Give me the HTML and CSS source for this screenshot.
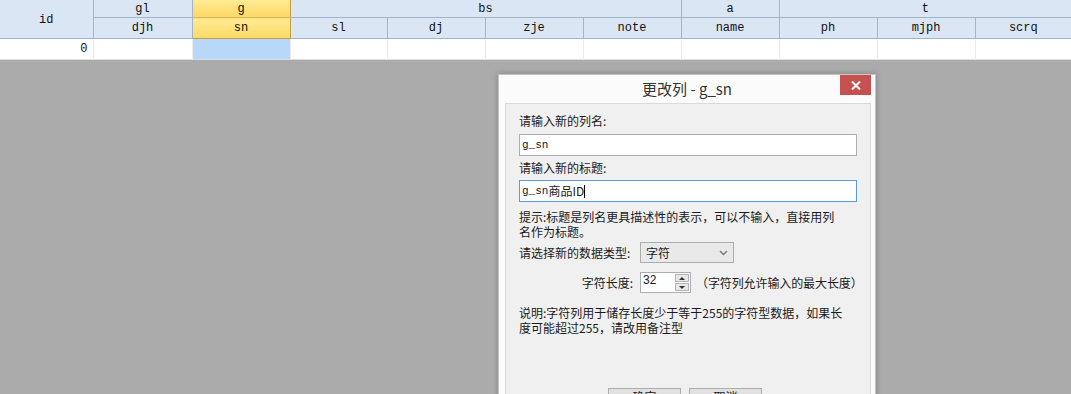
FILE: index.html
```html
<!DOCTYPE html>
<html lang="zh-CN">
<head>
    <meta charset="UTF-8">
    <title>更改列 - g_sn</title>
    <link rel="stylesheet" href="styles.css">
</head>
<body>
    <table class="grid">
        <colgroup>
            <col style="width:93px">
            <col style="width:99px">
            <col style="width:98px">
            <col style="width:97px">
            <col style="width:98px">
            <col style="width:98px">
            <col style="width:98px">
            <col style="width:98px">
            <col style="width:98px">
            <col style="width:98px">
            <col style="width:96px">
        </colgroup>
        <thead>
            <tr class="group-row">
                <th rowspan="2" class="id-head">id</th>
                <th>gl</th>
                <th class="current">g</th>
                <th colspan="4">bs</th>
                <th>a</th>
                <th colspan="3">t</th>
            </tr>
            <tr class="name-row">
                <th>djh</th>
                <th class="current">sn</th>
                <th>sl</th>
                <th>dj</th>
                <th>zje</th>
                <th>note</th>
                <th>name</th>
                <th>ph</th>
                <th>mjph</th>
                <th>scrq</th>
            </tr>
        </thead>
        <tbody>
            <tr class="data-row">
                <td class="num">0</td>
                <td></td>
                <td class="selected"></td>
                <td></td>
                <td></td>
                <td></td>
                <td></td>
                <td></td>
                <td></td>
                <td></td>
                <td></td>
            </tr>
        </tbody>
    </table>

    <div class="dialog">
        <div class="dialog-title">
            <span>更改列 - g_sn</span>
            <div class="close-btn">
                <svg width="10" height="9" viewBox="0 0 10 9">
                    <path d="M1 0.5 L9 8.5 M9 0.5 L1 8.5" stroke="#fff" stroke-width="2"/>
                </svg>
            </div>
        </div>
        <div class="panel">
            <div class="label">请输入新的列名:</div>
            <div class="textbox">g_sn</div>
            <div class="label label-gap">请输入新的标题:</div>
            <div class="textbox focused">g_sn<span class="cjk">商品ID</span><span class="caret"></span></div>
            <p class="hint">提示:标题是列名更具描述性的表示，可以不输入，直接用列<br>名作为标题。</p>

            <div class="form-grid">
                <div class="label">请选择新的数据类型:</div>
                <div class="select">
                    <span>字符</span>
                    <svg width="9" height="6" viewBox="0 0 9 6">
                        <path d="M1 1 L4.5 4.5 L8 1" stroke="#777" stroke-width="1.4" fill="none"/>
                    </svg>
                </div>
                <div class="label right">字符长度:</div>
                <div class="spin-row">
                    <div class="spinner">
                        <span class="spin-value">32</span>
                        <div class="spin-btns">
                            <div class="spin-up"></div>
                            <div class="spin-down"></div>
                        </div>
                    </div>
                    <span class="spin-note">（字符列允许输入的最大长度）</span>
                </div>
            </div>

            <p class="note">说明:字符列用于储存长度少于等于255的字符型数据，如果长<br>度可能超过255，请改用备注型</p>

            <div class="buttons">
                <div class="btn">确定</div>
                <div class="btn">取消</div>
            </div>
        </div>
    </div>
</body>
</html>
```

FILE: styles.css
```css
body {
    margin: 0;
    padding: 0;
    background: #ababab;
    font-family: "Noto Sans CJK SC", "Noto Sans", sans-serif;
    font-size: 12px;
    color: #1a1a1a;
    overflow: hidden;
}

.grid {
    width: 1071px;
    table-layout: fixed;
    border-collapse: collapse;
    font-family: "Liberation Mono", "Noto Sans CJK SC", monospace;
    font-size: 12px;
    background: #fff;
    border-bottom: 1px solid #dcdcdc;
}

.grid th {
    background: #dbe6f4;
    border-right: 1px solid #9fb5cc;
    border-bottom: 1px solid #9fb5cc;
    font-weight: normal;
    color: #111;
    padding: 0;
    line-height: 14px;
    text-align: center;
}

.grid th:last-child {
    border-right: none;
}

.group-row th {
    height: 16px;
    padding-top: 1px;
}

.name-row th {
    height: 20px;
}

.grid .current {
    background: linear-gradient(to bottom, #ffeb94, #fdd865);
    border-left: 1px solid #c59f45;
    border-right: 1px solid #c59f45;
    border-bottom: 1px solid #c59f45;
}

.group-row .current {
    border-bottom: 1px solid #d9b55a;
}

.data-row td {
    height: 20px;
    padding: 0;
    line-height: 14px;
    border-right: 1px solid #ebebeb;
}

.data-row .num {
    text-align: right;
    padding-right: 5px;
    color: #111;
}

.data-row .selected {
    background: #b8d8f9;
}

/* dialog floats over the grid */
.dialog {
    position: absolute;
    left: 498px;
    top: 74px;
    width: 376px;
    height: 340px;
    background: #fbfbfb;
    border: 1px solid #c4c4c4;
    box-shadow: 0 0 6px rgba(0, 0, 0, 0.25);
}

.dialog-title {
    position: relative;
    height: 28px;
    text-align: center;
    font-size: 15px;
    line-height: 28px;
    color: #333;
}

.close-btn {
    position: absolute;
    right: 4px;
    top: 0;
    width: 31px;
    height: 20px;
    background: #c75050;
    display: flex;
    align-items: center;
    justify-content: center;
}

.panel {
    margin: 0 4px 0 6px;
    height: 320px;
    background: #f0f0f0;
    border: 1px solid #dadada;
    padding: 9px 13px 0 13px;
}

.label {
    height: 16px;
    line-height: 16px;
    white-space: nowrap;
}

.label-gap {
    margin-top: 4px;
}

.textbox {
    margin-top: 5px;
    height: 20px;
    background: #fff;
    border: 1px solid #abadb3;
    font-family: "Liberation Mono", monospace;
    font-size: 11px;
    line-height: 20px;
    padding-left: 2px;
    display: flex;
    align-items: center;
}

.textbox .cjk {
    font-family: "Noto Sans CJK SC", sans-serif;
    font-size: 12px;
}

.textbox.focused {
    margin-top: 4px;
    border-color: #569de5;
}

.caret {
    width: 1px;
    height: 13px;
    background: #000;
}

.hint {
    margin: 7px 0 0 0;
    line-height: 15px;
    color: #1a1a1a;
}

.form-grid {
    margin-top: 3px;
    display: grid;
    grid-template-columns: 121px 219px;
    row-gap: 9px;
    align-items: center;
}

.form-grid .right {
    text-align: right;
    padding-right: 7px;
}

.select {
    width: 94px;
    height: 21px;
    box-sizing: border-box;
    background: #e9e9e9;
    border: 1px solid #acacac;
    display: flex;
    align-items: center;
    justify-content: space-between;
    padding: 0 5px;
}

.spin-row {
    display: flex;
    align-items: center;
    gap: 5px;
    white-space: nowrap;
}

.spinner {
    flex: none;
    width: 51px;
    height: 21px;
    box-sizing: border-box;
    border: 1px solid #abadb3;
    background: #fff;
    display: flex;
}

.spin-value {
    flex: 1;
    font-size: 12px;
    line-height: 14px;
    padding-left: 2px;
    font-family: "Liberation Sans", sans-serif;
}

.spin-btns {
    width: 14px;
    display: flex;
    flex-direction: column;
    padding: 1px;
    gap: 1px;
}

.spin-up,
.spin-down {
    flex: 1;
    background: #e7e7e7;
    border: 1px solid #b5b5b5;
    position: relative;
}

.spin-up::after,
.spin-down::after {
    content: "";
    position: absolute;
    left: 3px;
    border-left: 3px solid transparent;
    border-right: 3px solid transparent;
}

.spin-up::after {
    top: 2px;
    border-bottom: 3px solid #333;
}

.spin-down::after {
    top: 2px;
    border-top: 3px solid #333;
}

.spin-note {
    letter-spacing: -0.1px;
}

.note {
    margin: 12px 0 0 0;
    line-height: 15px;
    color: #1a1a1a;
}

.buttons {
    margin-top: 53px;
    padding-left: 89px;
    display: flex;
    gap: 8px;
}

.btn {
    width: 73px;
    height: 23px;
    box-sizing: border-box;
    background: #e1e1e1;
    border: 1px solid #adadad;
    text-align: center;
    padding-top: 1px;
    line-height: 14px;
}
```
